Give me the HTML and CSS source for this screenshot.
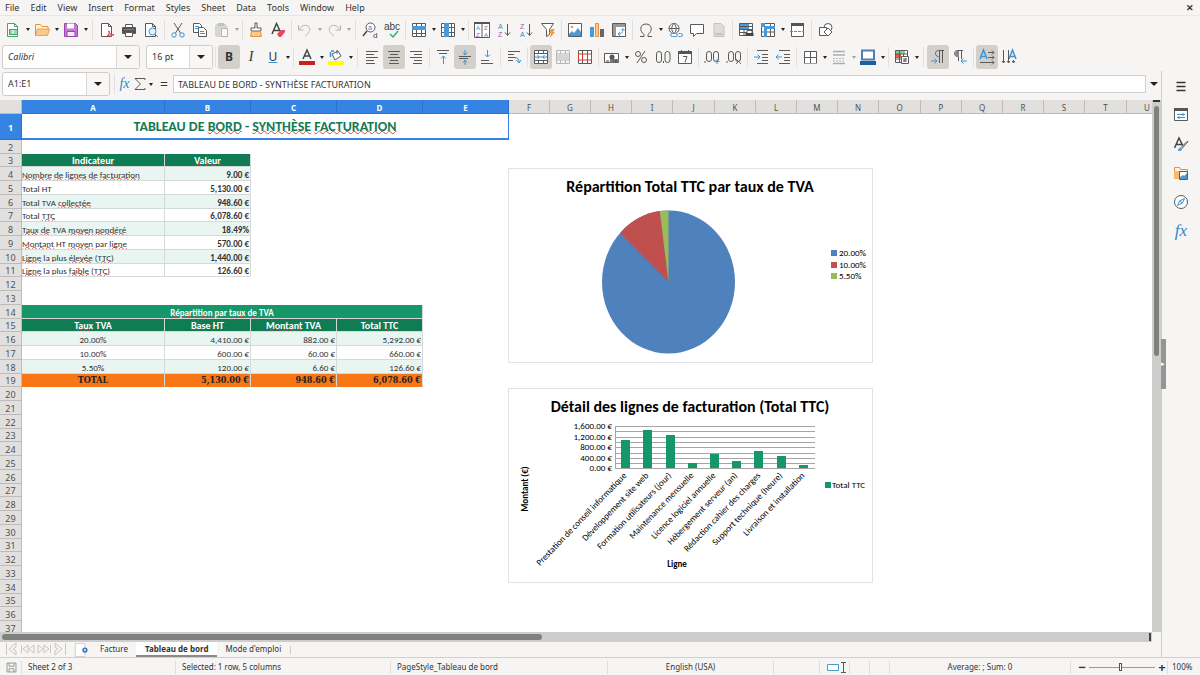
FILE: index.html
```html
<!DOCTYPE html>
<html lang="en">
<head>
<meta charset="utf-8">
<title>Tableau de bord</title>
<link rel="stylesheet" href="styles.css">
</head>
<body>
<div class="app">
<nav class="menubar">
<button>File</button><button>Edit</button><button>View</button><button>Insert</button><button>Format</button><button>Styles</button><button>Sheet</button><button>Data</button><button>Tools</button><button>Window</button><button>Help</button>
<button class="close" aria-label="Close">✕</button>
</nav>

<div class="toolbar" role="toolbar" aria-label="Standard">
<button class="tool" aria-label="New"><svg viewBox="0 0 16 16"><path class="g" d="M2.5 1.500h7l3 3v10h-10z M9.500 1.500v3h3"/><path class="gf" d="M4 7h9v6H4z"/><path d="M5 9h7M5 11h7M8 8v4" stroke="#fff"/></svg></button><button class="drop" aria-label="New options"></button>
<button class="tool" aria-label="Open"><svg viewBox="0 0 16 16"><path d="M1.500 13.500V2.500h5l1.500 2h6v3" fill="#fff3df" stroke="#e9913a"/><path d="M1.500 13.500l2-6.500h12l-2 6.500z" fill="#fbc98a" stroke="#e9a050"/></svg></button><button class="drop" aria-label="Open options"></button>
<button class="tool" aria-label="Save"><svg viewBox="0 0 16 16"><path d="M1.500 1.500h11l2 2v11h-13z" fill="#c37bd1" stroke="#9a45ad"/><path d="M4 1.500h7v5H4z" fill="#fff"/><path d="M4 9.500h8v5H4z" fill="#f5e9f7" stroke="#9a45ad"/></svg></button><button class="drop" aria-label="Save options"></button>
<span class="sep wide"></span>
<button class="tool" aria-label="Export PDF"><svg viewBox="0 0 16 16"><path class="k w" d="M2.500 1.500h7l3 3v10h-10z M9.500 1.500v3h3"/><path d="M7 15c3-2 4-5 3-6s-1 3 5 4c-3-.5-6 0-8 2" fill="none" stroke="#e0384a"/></svg></button>
<button class="tool" aria-label="Print"><svg viewBox="0 0 16 16"><path class="k w" d="M4.500 5V2.500h7V5"/><rect x="1" y="5" width="14" height="7" rx="1" fill="#555"/><path class="b" d="M3 7.500h10"/><path class="k w" d="M4.500 10.500h7v4h-7z"/></svg></button>
<button class="tool" aria-label="Preview"><svg viewBox="0 0 16 16"><path class="k w" d="M2.500 1.500h7l3 3v10h-10z M9.500 1.500v3h3"/><circle cx="9.500" cy="9.500" r="3.500" fill="#e3f1fb" stroke="#3a94d6"/><path class="b" d="M12 12l3 3"/></svg></button>
<span class="sep"></span>
<button class="tool" aria-label="Cut"><svg viewBox="0 0 16 16"><path class="k" d="M4 1l6.500 10M12 1L5.500 11"/><circle class="b" cx="4" cy="13" r="2.200"/><circle class="b" cx="12" cy="13" r="2.200"/></svg></button>
<button class="tool" aria-label="Copy"><svg viewBox="0 0 16 16"><path class="k w" d="M1.500 1.500h6l2 2v7h-8z"/><path class="k w" d="M6.500 5.500h5l3 3v6h-8z"/><path class="b" d="M3 4.500h4M3 6.500h3M8 9.500h4M8 11.500h5"/></svg></button>
<button class="tool dim" aria-label="Paste"><svg viewBox="0 0 16 16"><path class="k" d="M2 3h10v11H2z"/><path d="M2 3h10v11H2z" fill="#aaa"/><path d="M4 1h6v3H4z" fill="#777"/><path class="k w" d="M7.500 6.500h6v8h-6z"/></svg></button><button class="drop dim" aria-label="Paste options"></button>
<span class="sep"></span>
<button class="tool" aria-label="Clone formatting"><svg viewBox="0 0 16 16"><path class="k w" d="M7 1h2v5h4v3H3V6h4z"/><path d="M3.500 9.500h9l1 5h-11z" fill="#fbc98a" stroke="#e9913a"/></svg></button>
<button class="tool" aria-label="Clear formatting"><svg viewBox="0 0 16 16"><path class="k2" d="M2 12L6.500 1.500 11 11M4 8.500h5"/><path d="M7 12l4-4h4v2l-4 5H9z" fill="#e8465a"/></svg></button>
<span class="sep"></span>
<button class="tool dim" aria-label="Undo"><svg viewBox="0 0 16 16"><path class="k" d="M1.500 3v5h5M2 8c2-5 8-6 10-3s0 6-4 9"/></svg></button><button class="drop dim" aria-label="Undo history"></button>
<button class="tool dim" aria-label="Redo"><svg viewBox="0 0 16 16"><path class="k" d="M14.500 3v5h-5M14 8C12 3 6 2 4 5s0 6 4 9"/></svg></button><button class="drop dim" aria-label="Redo history"></button>
<span class="sep wide"></span>
<button class="tool" aria-label="Find and replace"><svg viewBox="0 0 16 16"><circle class="k w" cx="8.500" cy="5.500" r="4.500"/><path class="k2" d="M5 9l-4 5"/><text x="6" y="8" class="tb" font-size="7">a</text><text x="11" y="16" class="tk" font-size="8">d</text></svg></button>
<button class="tool" aria-label="Spelling"><svg viewBox="0 0 16 16"><text x="0" y="8" class="tk" font-size="10">abc</text><path class="g2" d="M6 12l3 3 5-6"/></svg></button>
<span class="sep"></span>
<button class="tool" aria-label="Row"><svg viewBox="0 0 16 16"><path class="k w" d="M1.500 1.500h13v13h-13z M1.500 11.500h13M5.500 1.500v13M10.500 1.500v13"/><path class="bf" d="M1 4h14v4H1z"/></svg></button><button class="drop" aria-label="Row options"></button>
<button class="tool" aria-label="Column"><svg viewBox="0 0 16 16"><path class="k w" d="M1.500 1.500h13v13h-13z M1.500 5.500h13M1.500 10.500h13M11.500 1.500v13"/><path class="bf" d="M4 1h5v14H4z"/></svg></button><button class="drop" aria-label="Column options"></button>
<span class="sep"></span>
<button class="tool" aria-label="Sort"><svg viewBox="0 0 16 16"><path class="k w" d="M.5 1.500h15v14H.5z M8 1.500v14"/><path d="M0 0h16v2H0z" fill="#555"/><text x="2" y="8" class="tb" font-size="6">A</text><text x="2" y="15" class="tp" font-size="6">Z</text><text x="10" y="8" class="tp" font-size="6">Z</text><text x="10" y="15" class="tb" font-size="6">A</text></svg></button>
<button class="tool" aria-label="Sort ascending"><svg viewBox="0 0 16 16"><text x="2" y="7" class="tb" font-size="7">A</text><text x="2" y="15" class="tp" font-size="7">Z</text><path class="k" d="M11.500 2v11M9 10.500l2.500 3 2.500-3"/></svg></button>
<button class="tool" aria-label="Sort descending"><svg viewBox="0 0 16 16"><text x="2" y="7" class="tp" font-size="7">Z</text><text x="2" y="15" class="tb" font-size="7">A</text><path class="k" d="M11.500 2v11M9 10.500l2.500 3 2.500-3"/></svg></button>
<button class="tool" aria-label="AutoFilter"><svg viewBox="0 0 16 16"><path class="k w" d="M1.500 1.500h12l-4 6v5l-3 2v-7z"/><path d="M11 7h4l-2 3h2l-5 6 1-5H9z" fill="#f0993e"/></svg></button>
<span class="sep"></span>
<button class="tool" aria-label="Image"><svg viewBox="0 0 16 16"><path class="k w" d="M1.500 1.500h13v13h-13z"/><path class="bf" d="M2 14v-2l3-3 2 2 4-5 3 4v4z"/><circle cx="5" cy="5" r="1.300" fill="#f0993e"/></svg></button>
<button class="tool" aria-label="Chart"><svg viewBox="0 0 16 16"><path class="bf" d="M1 5h4v10H1z"/><path d="M6.500 1.500h3v13h-3z" fill="#fbc98a" stroke="#e9913a"/><path d="M11 7h4v8h-4z" fill="#666"/></svg></button>
<button class="tool" aria-label="Pivot table"><svg viewBox="0 0 16 16"><path class="k w" d="M1.500 1.500h13v13h-13z"/><path d="M2 2h12v3H5v9H2z" fill="#999"/><path class="b" d="M7 12c3 0 5-1 5-5M10 8.500l2-2 2 2M9 10l-2 2 2 2"/></svg></button>
<span class="sep"></span>
<button class="tool" aria-label="Special character"><svg viewBox="0 0 16 16"><path class="k" d="M2 14.500h4v-2C1 9 2 2 8 2s7 7 2 10.500v2h4"/></svg></button><button class="drop" aria-label="More characters"></button>
<button class="tool" aria-label="Hyperlink"><svg viewBox="0 0 16 16"><path class="k w" d="M7 1.500a5 5 0 1 0 .1 0M2 6.500h10M7 1.500c-3 3-3 7 0 10M7 1.500c3 3 3 7 0 10"/><path class="b w" d="M5.500 11.500h3q2 0 2 1.500t-2 1.500h-3q-2 0-2-1.500t2-1.500M11.500 11.500h2q2 0 2 1.500t-2 1.500h-2"/></svg></button>
<button class="tool" aria-label="Comment"><svg viewBox="0 0 16 16"><path class="k w" d="M1.500 2.500h13v9h-7l-3 3v-3h-3z"/></svg></button>
<button class="tool dim" aria-label="Headers and footers"><svg viewBox="0 0 16 16"><path d="M3 1.500h7l3 3v10H3z" fill="#bbb" stroke="#777"/><path d="M4.500 11h7v2h-7z" fill="#777"/></svg></button>
<span class="sep"></span>
<button class="tool" aria-label="Print area"><svg viewBox="0 0 16 16"><path class="k w" d="M1.500 1.500h13v12h-13z M1.500 10.500h13M6 1v13M10.500 1v13"/><path class="bf" d="M2 2h9v6H2z"/><path class="k" d="M1.500 4.500h13M1.500 7.500h13"/><path class="k w" d="M9 8.500h5v3H9z"/><path d="M7.500 11h8v3h-8z" fill="#444"/></svg></button>
<button class="tool" aria-label="Freeze"><svg viewBox="0 0 16 16"><path class="k w" d="M1.500 1.500h13v13h-13z M1.500 10h13M10.500 1v14"/><path class="bf" d="M4 4h11v3H7v8H4z M1 1h4v4H1z"/></svg></button><button class="drop" aria-label="Freeze options"></button>
<button class="tool" aria-label="Split window"><svg viewBox="0 0 16 16"><path class="k w" d="M2.500 2.500h12v12h-12z"/><path d="M2 1h13v3H2z" fill="#555"/><path class="b" d="M1 9.500h14" stroke-dasharray="3 1"/></svg></button>
<span class="sep wide"></span>
<button class="tool" aria-label="Draw functions"><svg viewBox="0 0 16 16"><circle class="k w" cx="10" cy="5.500" r="4"/><path class="k w" d="M1.500 5.500h7v8h-7z"/><path class="k w" d="M10 6l4 4-4 4-4-4z"/></svg></button>
</div>

<div class="toolbar format" role="toolbar" aria-label="Formatting">
<div class="combo font"><input aria-label="Font name" value="Calibri"><button aria-label="Font list"></button></div>
<div class="combo size"><input aria-label="Font size" value="16 pt"><button aria-label="Size list"></button></div>
<span class="sep"></span>
<button class="tool on glyph" aria-label="Bold"><b>B</b></button>
<button class="tool glyph" aria-label="Italic"><i>I</i></button>
<button class="tool glyph" aria-label="Underline"><u>U</u></button><button class="drop" aria-label="Underline options"></button>
<span class="sep"></span>
<button class="tool" aria-label="Font color"><svg viewBox="0 0 16 16"><path class="k2" d="M4 10L8 1l4 9M5.500 7h5"/><path d="M0 12h16v4H0z" fill="#c9211e"/></svg></button><button class="drop" aria-label="Font colors"></button>
<button class="tool" aria-label="Highlighting"><svg viewBox="0 0 16 16"><path class="k w" d="M4 5l6-3 3 5-6 4z M9 1v4"/><path class="b2" d="M3 2h3M2.500 3v5"/><path d="M0 12h16v4H0z" fill="#ff0"/></svg></button><button class="drop" aria-label="Highlight colors"></button>
<span class="sep wide"></span>
<button class="tool" aria-label="Align left"><svg viewBox="0 0 16 16"><path class="k" d="M2 2.500h12M2 5.500h8M2 8.500h12M2 11.500h8M2 14.500h9"/></svg></button>
<button class="tool on" aria-label="Center"><svg viewBox="0 0 16 16"><path class="k" d="M2 2.500h12M4 5.500h8M2 8.500h12M4 11.500h8M3 14.500h10"/></svg></button>
<button class="tool" aria-label="Align right"><svg viewBox="0 0 16 16"><path class="k" d="M2 2.500h12M6 5.500h8M2 8.500h12M6 11.500h8M5 14.500h9"/></svg></button>
<span class="sep"></span>
<button class="tool" aria-label="Align top"><svg viewBox="0 0 16 16"><path class="k" d="M2 1.500h12M4 4.500h8"/><path class="b" d="M8.500 15V7M6 9.500L8.500 7 11 9.500"/></svg></button>
<button class="tool on" aria-label="Center vertically"><svg viewBox="0 0 16 16"><path class="k" d="M2 7.500h12M2 9.500h9"/><path class="b" d="M8 1v5M6 3.500L8 6l2-2.500M8 16v-5M6 13.500L8 11l2 2.500"/></svg></button>
<button class="tool" aria-label="Align bottom"><svg viewBox="0 0 16 16"><path class="k" d="M2 11.500h8M2 14.500h12"/><path class="b" d="M8.500 1v7M6 5.500L8.500 8 11 5.500"/></svg></button>
<span class="sep"></span>
<button class="tool" aria-label="Wrap text"><svg viewBox="0 0 16 16"><path class="k" d="M2 2.500h12M2 5.500h6M2 8.500h8M2 11.500h5"/><path class="b" d="M9 8.500c3 0 4 2 4 5M10.500 11l2.500 3 2-3"/></svg></button>
<span class="sep"></span>
<button class="tool on" aria-label="Merge and center"><svg viewBox="0 0 16 16"><path class="k w" d="M1.500 1.500h13v13h-13z M1.500 4.500h13M1.500 11.500h13M5.500 1.500v3M10.500 1.500v3M5.500 11.500v3M10.500 11.500v3"/><path class="b" d="M2 8h12M4.500 6L6 8l-1.500 2M11.500 6L10 8l1.500 2"/></svg></button>
<button class="tool dim" aria-label="Merge"><svg viewBox="0 0 16 16"><path class="k" d="M1.500 1.500h13v13h-13z M1.500 5h13M1.500 11h13M5.500 1.500V5M10.500 1.500V5M5.500 11v3.500M10.500 11v3.500"/><path d="M2 5h12v6H2z" fill="#aaa"/></svg></button>
<button class="tool" aria-label="Unmerge"><svg viewBox="0 0 16 16"><path class="k w" d="M1.500 1.500h13v13h-13zM5.500 1v14M10.500 1v14"/><path d="M1.500 5h13v6h-13zM5.500 5v6M10.500 5v6" fill="none" stroke="#d9382f"/></svg></button>
<span class="sep"></span>
<button class="tool" aria-label="Currency"><svg viewBox="0 0 16 16"><path class="k w" d="M.5 4.500h14v9H.5z"/><circle cx="8" cy="8" r="2.500" fill="#555"/><path d="M6 10h9v4H6z" fill="#777"/><path d="M2 12h3M9 12h1M12 11v3" stroke="#444"/></svg></button><button class="drop" aria-label="Currencies"></button>
<button class="tool" aria-label="Percent"><svg viewBox="0 0 16 16"><circle class="k" cx="5" cy="5" r="2.500"/><circle class="k" cx="11" cy="11" r="2.500"/><path class="k" d="M12 2L4 14"/></svg></button>
<button class="tool" aria-label="Number"><svg viewBox="0 0 16 16"><rect class="k" x="1.500" y="2.500" width="5" height="11" rx="2.500"/><rect class="k" x="10" y="2.500" width="5" height="11" rx="2.500"/><path class="k" d="M8.500 12v2"/></svg></button>
<button class="tool" aria-label="Date"><svg viewBox="0 0 16 16"><path class="k w" d="M1.500 3.500h13v11h-13z"/><path d="M1 2h14v3H1z" fill="#555"/><path class="k" d="M4.500 1v2M11.500 1v2M6 7.500h4l-2 6"/></svg></button>
<span class="sep"></span>
<button class="tool" aria-label="Add decimal place"><svg viewBox="0 0 16 16"><path class="k" d="M1 12v2"/><rect class="k" x="2.500" y="2.500" width="5" height="10" rx="2.500"/><rect class="k" x="9.500" y="2.500" width="5" height="10" rx="2.500"/><path class="b" d="M13 10v5M10.500 12.500h5"/></svg></button>
<button class="tool" aria-label="Delete decimal place"><svg viewBox="0 0 16 16"><path class="k" d="M1 12v2"/><rect class="k" x="2.500" y="2.500" width="5" height="10" rx="2.500"/><rect class="k" x="9.500" y="2.500" width="5" height="10" rx="2.500"/><path d="M10 10l5 5M15 10l-5 5" stroke="#e0382f"/></svg></button>
<span class="sep"></span>
<button class="tool" aria-label="Increase indent"><svg viewBox="0 0 16 16"><path class="k" d="M4 1.500h11M9 5.500h6M9 8.500h6M9 11.500h6M4 14.500h11"/><path class="b" d="M1 8h6M4.500 5.500L7 8l-2.500 2.500"/></svg></button>
<button class="tool" aria-label="Decrease indent"><svg viewBox="0 0 16 16"><path class="k" d="M4 1.500h11M9 5.500h6M9 8.500h6M9 11.500h6M4 14.500h11"/><path class="b" d="M1 8h6M3.500 5.500L1 8l2.500 2.500"/></svg></button>
<span class="sep"></span>
<button class="tool" aria-label="Borders"><svg viewBox="0 0 16 16"><path class="k w" d="M2.500 2.500h12v12h-12zM8.500 2.500v12M2.500 8.500h12"/><path d="M2 14.500h13" stroke="#e9913a"/></svg></button><button class="drop" aria-label="Border options"></button>
<button class="tool dim" aria-label="Border style"><svg viewBox="0 0 16 16"><path class="k2" d="M2 2.500h12M2 6h12"/><path class="k" d="M2 9.500h12M2 12h12" stroke-dasharray="2 1"/><path class="k2" d="M2 14.500h12"/></svg></button><button class="drop dim" aria-label="Border styles"></button>
<button class="tool" aria-label="Border color"><svg viewBox="0 0 16 16"><path d="M2 1.500h12v9H2z" fill="#fff" stroke="#4b7fb5" stroke-width="2"/><path d="M0 12h16v4H0z" fill="#1f5fa0"/></svg></button><button class="drop" aria-label="Border colors"></button>
<span class="sep"></span>
<button class="tool" aria-label="Conditional formatting"><svg viewBox="0 0 16 16"><path class="k w" d="M1.500 1.500h12v12h-12zM1.500 10h12M9.500 1v12"/><path d="M2 2h9v3H2z" fill="#7dcf8e"/><path d="M2 5h5v4H2z" fill="#e8564a"/><path d="M5.500 1v13M1.500 5h12" class="k"/><path class="k w" d="M7.500 7.500h7v7h-7zM9 10h4M9 12h4M12 9l-2 4"/></svg></button><button class="drop" aria-label="Conditions"></button>
<span class="sep wide"></span>
<button class="tool on" aria-label="Left-to-right"><svg viewBox="0 0 16 16"><path class="k" d="M14 1.500H8.500c-4 0-4 6 0 6M9.500 2v12M12.500 2v12"/><path class="b" d="M1 12h6M4.500 9.500L7 12l-2.500 2.500"/></svg></button>
<button class="tool" aria-label="Right-to-left"><svg viewBox="0 0 16 16"><path class="k" d="M11 1.500H5.500c-4 0-4 6 0 6M6.500 2v10M9.500 2v8"/><path d="M4 2h3v6c-4 0-5-4-3-6" fill="#888"/><path class="b" d="M9 12h6M11.500 9.500L9 12l2.500 2.500"/></svg></button>
<span class="sep"></span>
<button class="tool on" aria-label="Text left to right"><svg viewBox="0 0 16 16"><path class="b2" d="M1 10L4.500 1 8 10M2 7.500h5"/><path class="k" d="M9 3.500h6M13 1.500l2 2-2 2M9 8.500h6M13 6.500l2 2-2 2M1 13.500h14M13 11.500l2 2-2 2"/></svg></button>
<button class="tool" aria-label="Text top to bottom"><svg viewBox="0 0 16 16"><path class="b2" d="M8 10l3.500-9L15 10M9 7.500h5"/><path class="k" d="M2.500 1v13M1 12l1.500 2L4 12M7.500 1v13M6 12l1.500 2L9 12M12.500 11v3M11 12l1.500 2 1.500-2"/></svg></button>
</div>

<div class="workspace">
<main class="document">
<div class="formulabar">
<div class="combo name"><input aria-label="Name box" value="A1:E1"><button aria-label="Names"></button></div>
<span class="sep"></span>
<button class="fn fx" aria-label="Function wizard">fx</button>
<button class="fn" aria-label="Sum"><svg viewBox="0 0 16 16"><path class="k" d="M13 4V2.500H3L8.500 8 3 13.500h10V12"/></svg></button><button class="drop" aria-label="Functions"></button>
<button class="fn eq" aria-label="Formula">=</button>
<input class="formula" aria-label="Input line" value="TABLEAU DE BORD - SYNTHÈSE FACTURATION">
<button class="expand" aria-label="Expand"></button>
</div>

<div class="sheetarea">
<div class="sheet">
<table class="grid">
<colgroup><col class="rowhead"><col class="ca"><col class="cb"><col class="cb"><col class="cb"><col class="cb"><col><col><col><col><col class="cx"><col><col><col><col><col class="cx"><col><col><col><col><col class="cx"><col></colgroup>
<thead><tr><th></th><th class="sel">A</th><th class="sel">B</th><th class="sel">C</th><th class="sel">D</th><th class="sel">E</th><th>F</th><th>G</th><th>H</th><th>I</th><th>J</th><th>K</th><th>L</th><th>M</th><th>N</th><th>O</th><th>P</th><th>Q</th><th>R</th><th>S</th><th>T</th><th>U</th></tr></thead>
<tbody>
<tr class="first"><th class="sel">1</th><td class="title" colspan="5">TABLEAU DE <s>BORD</s> - <s>SYNTHÈSE</s> <s>FACTURATION</s></td></tr>
<tr><th>2</th></tr>
<tr class="head"><th>3</th><td><s>Indicateur</s></td><td><s>Valeur</s></td></tr>
<tr class="kpi tint"><th>4</th><td><s>Nombre</s> <s>de</s> <s>lignes</s> <s>de</s> <s>facturation</s></td><td>9.00 €</td></tr>
<tr class="kpi"><th>5</th><td>Total HT</td><td>5,130.00 €</td></tr>
<tr class="kpi tint"><th>6</th><td>Total TVA <s>collectée</s></td><td>948.60 €</td></tr>
<tr class="kpi"><th>7</th><td>Total <s>TTC</s></td><td>6,078.60 €</td></tr>
<tr class="kpi tint"><th>8</th><td><s>Taux</s> <s>de</s> TVA <s>moyen</s> <s>pondéré</s></td><td>18.49%</td></tr>
<tr class="kpi"><th>9</th><td><s>Montant</s> HT <s>moyen</s> par <s>ligne</s></td><td>570.00 €</td></tr>
<tr class="kpi tint"><th>10</th><td><s>Ligne</s> la plus <s>élevée</s> (<s>TTC</s>)</td><td>1,440.00 €</td></tr>
<tr class="kpi"><th>11</th><td><s>Ligne</s> la plus <s>faible</s> (<s>TTC</s>)</td><td>126.60 €</td></tr>
<tr><th>12</th></tr>
<tr><th>13</th></tr>
<tr class="band"><th>14</th><td colspan="4"><s>Répartition</s> par <s>taux</s> <s>de</s> TVA</td></tr>
<tr class="head"><th>15</th><td><s>Taux</s> TVA</td><td>Base HT</td><td><s>Montant</s> TVA</td><td>Total <s>TTC</s></td></tr>
<tr class="vat tint"><th>16</th><td>20.00%</td><td>4,410.00 €</td><td>882.00 €</td><td>5,292.00 €</td></tr>
<tr class="vat"><th>17</th><td>10.00%</td><td>600.00 €</td><td>60.00 €</td><td>660.00 €</td></tr>
<tr class="vat tint"><th>18</th><td>5.50%</td><td>120.00 €</td><td>6.60 €</td><td>126.60 €</td></tr>
<tr class="total"><th>19</th><td>TOTAL</td><td>5,130.00 €</td><td>948.60 €</td><td>6,078.60 €</td></tr>
<tr><th>20</th></tr><tr><th>21</th></tr><tr><th>22</th></tr><tr><th>23</th></tr><tr><th>24</th></tr><tr><th>25</th></tr><tr><th>26</th></tr><tr><th>27</th></tr><tr><th>28</th></tr><tr><th>29</th></tr><tr><th>30</th></tr><tr><th>31</th></tr><tr><th>32</th></tr><tr><th>33</th></tr><tr><th>34</th></tr><tr><th>35</th></tr><tr><th>36</th></tr><tr><th>37</th></tr>
</tbody>
</table>
<svg class="chart pie" viewBox="0 0 365 195" role="img" aria-label="Répartition Total TTC par taux de TVA">
<text class="ctitle" x="182" y="24">Répartition Total TTC par taux de TVA</text>
<ellipse cx="160.500" cy="114" rx="66.500" ry="71.500" fill="#4f81bd"/>
<path d="M160.500 114L112.200 64.900A66.500 71.500 0 0 1 151.800 43.100z" fill="#c0504d"/>
<path d="M160.500 114L151.800 43.100A66.500 71.500 0 0 1 160.500 42.500z" fill="#9bbb59"/>
<path d="M323 82h6v6h-6z" fill="#4f81bd"/><path d="M323 94h6v6h-6z" fill="#c0504d"/><path d="M323 105h6v6h-6z" fill="#9bbb59"/>
<text class="clabel" x="331" y="88">20.00%</text><text class="clabel" x="331" y="100">10.00%</text><text class="clabel" x="331" y="111">5.50%</text>
</svg>
<svg class="chart bars" viewBox="0 0 365 195" role="img" aria-label="Détail des lignes de facturation (Total TTC)">
<text class="ctitle" x="182" y="24">Détail des lignes de facturation (Total TTC)</text>
<path class="gridlines" d="M107 38.500h200M107 43.500h200M107 49.500h200M107 54.500h200M107 59.500h200M107 65.500h200M107 70.500h200M107 75.500h200M107 80.500h200M107.500 38v43"/>
<path class="bar" d="M113 52h9v28h-9zM135 42h9v38h-9zM158 47h9v33h-9zM180 75h9v5h-9zM202 66h9v14h-9zM224 73h9v7h-9zM246 63h9v17h-9zM269 68h9v12h-9zM291 77h9v3h-9z"/>
<g class="clabel end"><text x="104" y="41">1,600.00 €</text><text x="104" y="52">1,200.00 €</text><text x="104" y="62">800.00 €</text><text x="104" y="73">400.00 €</text><text x="104" y="83">0.00 €</text></g>
<g class="clabel end"><text transform="translate(119 88) rotate(-46)">Prestation de conseil informatique</text><text transform="translate(141 88) rotate(-46)">Développement site web</text><text transform="translate(164 88) rotate(-46)">Formation utilisateurs (jour)</text><text transform="translate(186 88) rotate(-46)">Maintenance mensuelle</text><text transform="translate(208 88) rotate(-46)">Licence logiciel annuelle</text><text transform="translate(230 88) rotate(-46)">Hébergement serveur (an)</text><text transform="translate(253 88) rotate(-46)">Rédaction cahier des charges</text><text transform="translate(275 88) rotate(-46)">Support technique (heure)</text><text transform="translate(297 88) rotate(-46)">Livraison et installation</text></g>
<text class="caxis" transform="translate(20 101) rotate(-90)">Montant (€)</text>
<text class="caxis" x="169" y="179">Ligne</text>
<path class="bar" d="M317 94h6v6h-6z"/><text class="clabel" x="324" y="100">Total TTC</text>
</svg>
</div>
<div class="vscroll"><span class="mark"></span><span class="thumb"></span></div>
<div class="hscroll"><span class="thumb"></span><span class="mark"></span></div>
</div>

<div class="tabs">
<svg class="navs" viewBox="0 0 62 14"><path d="M1.500 1v12M11 1L4 7l7 6V9l-3-2 3-2zM16.500 3v8M23 3l-5 4 5 4zM29 3l-5 4 5 4zM33 3l5 4-5 4zM39 3l5 4-5 4zM45.500 3v8M50 1l7 6-7 6V9l3-2-3-2zM60.500 1v12"/></svg>
<button class="add" aria-label="Add sheet"><svg viewBox="0 0 16 16"><path d="M1.500.5h11v15h-11z" fill="#fff" stroke="#ccc"/><circle cx="12.500" cy="8" r="3" fill="#2a6db5"/><path d="M12.500 6.500v3M11 8h3" stroke="#fff"/></svg></button>
<button class="tab">Facture</button><button class="tab active">Tableau de bord</button><button class="tab last">Mode d'emploi</button>
</div>
</main>

<aside class="sidebar">
<button aria-label="Settings"><svg viewBox="0 0 16 16"><path d="M3.500 4.500h9M3.500 8.500h9M3.500 12.500h9" stroke="#333" stroke-width="1.500"/></svg></button>
<button aria-label="Properties"><svg viewBox="0 0 16 16"><path class="k w" d="M1.500 2.500h13v11h-13z"/><path d="M1 1h14v3H1z" fill="#555"/><path class="b" d="M4 7.500h8M10 6v3M4 10.500h8M6 9v3"/></svg></button>
<button aria-label="Styles"><svg viewBox="0 0 16 16"><path class="k2" d="M1.500 12L6 2l4 8M3 8.500h6"/><path class="k w" d="M15 5.500l-6 7-1-1 6-6z"/><path class="bf" d="M5 15c0-3 2-4 4-2 0 2-2 2-4 2"/></svg></button>
<button aria-label="Gallery"><svg viewBox="0 0 16 16"><path d="M1.500 13.500V2.500h5l1 2h7v2" fill="#fff3df" stroke="#e9913a"/><path d="M1 6h6v8H1z" fill="#f8b96b"/><path class="k w" d="M6.500 6.500h8v8h-8z"/><path class="bf" d="M7 14v-2l3-2 1 1 3-3v6z"/></svg></button>
<button aria-label="Navigator"><svg viewBox="0 0 16 16"><circle class="k w" cx="8" cy="8" r="6.500"/><path class="b" d="M11.500 4.500L9.500 9l-5 2.500L6.500 7zM6.500 7l3 2"/></svg></button>
<button class="fx" aria-label="Functions">fx</button>
<span class="grip">▸</span>
</aside>
</div>

<footer class="status">
<span class="saveicon"><svg viewBox="0 0 16 16"><path d="M2.500 2.500h11v11h-11zM5 2.500v4h6v-4M5 13.500v-4h6v4" fill="none" stroke="#888"/></svg></span>
<span>Sheet 2 of 3</span><span>Selected: 1 row, 5 columns</span><span>PageStyle_Tableau de bord</span><span class="mid">English (USA)</span><span></span>
<span class="ins"><svg viewBox="0 0 26 12"><path d="M3.500 3.500h11v6h-11z" fill="#fff" stroke="#4a9ad4"/><path class="k" d="M17 1.500h5M17 11.500h5M19.500 1v11"/></svg></span><span></span><span></span>
<span class="mid">Average: ; Sum: 0</span>
<span class="zoom"><button aria-label="Zoom out">−</button><input type="range" min="0" max="100" value="48" aria-label="Zoom"><button aria-label="Zoom in">+</button></span>
<span class="pct">100%</span>
</footer>
</div>
</body>
</html>
```

FILE: styles.css
```css
* { box-sizing: border-box; }
body { margin: 0; background: #f6f5f4; color: #333; font: 9px/12px "Noto Sans", sans-serif; }
button, input { font: inherit; color: inherit; border: 0; padding: 0; margin: 0; background: none; }
svg { display: block; }
.app { display: flex; flex-direction: column; height: 100vh; overflow: hidden; }

/* drawing classes shared by the icons */
.k { fill: none; stroke: #5a5a5a; }
.k2 { fill: none; stroke: #444; stroke-width: 1.500; }
.w { fill: #fff; }
.b { fill: none; stroke: #3a94d6; }
.b.w { fill: #fff; }
.b2 { fill: none; stroke: #3a94d6; stroke-width: 1.500; }
.bf { fill: #4a9ad9; }
.g { fill: #fff; stroke: #45a565; }
.g2 { fill: none; stroke: #35b36a; stroke-width: 1.500; }
.gf { fill: #45a565; }
.tk { fill: #444; }
.tb { fill: #2f8ad0; }
.tp { fill: #a94fc0; }
.tool text { font-family: "Liberation Sans", sans-serif; }

.menubar { display: flex; flex: none; align-items: center; height: 16px; border-bottom: 1px solid #e8e7e5; }
.menubar button { padding: 0 6px 0 5px; }
.menubar .close { margin-left: auto; font-weight: bold; }

.toolbar { display: flex; flex: none; align-items: center; height: 27px; padding-left: 2px; }
.format { height: 28px; }
.tool { display: flex; flex: none; align-items: center; justify-content: center; width: 22px; height: 24px; border-radius: 3px; }
.tool svg, .fn svg { width: 16px; height: 16px; overflow: visible; }
.tool.on { background: #d3d0cc; }
.tool.dim, .drop.dim { opacity: .4; }
.glyph { font-size: 12px; line-height: 16px; }
.glyph i { font-family: "Liberation Serif", serif; font-size: 14px; }
.glyph u { text-decoration-color: #3a94d6; }
.drop { flex: none; display: flex; justify-content: center; width: 7px; }
.drop::after, .combo button::after, .expand::after { content: ""; border: 3px solid transparent; border-top-color: #222; border-bottom: 0; }
.drop::after { border-width: 3px 2px 0; }
.combo button::after, .expand::after { border-width: 4px 4px 0; }
.sep { flex: none; width: 5px; height: 20px; background: linear-gradient(#e2e0de, #e2e0de) center / 1px 100% no-repeat; }
.sep.wide { width: 7px; }
.combo { display: flex; flex: none; height: 24px; border: 1px solid #cfccc9; border-radius: 3px; background: #fff; overflow: hidden; }
.combo input { flex: 1; min-width: 0; padding-left: 5px; }
.combo button { display: flex; align-items: center; justify-content: center; width: 23px; border-left: 1px solid #dad7d4; background: #f8f7f6; }
.font { width: 138px; margin-right: 6px; }
.font input { font-style: italic; }
.size { width: 67px; }

.workspace { display: flex; flex: 1; min-height: 0; }
.document { display: flex; flex: 1; flex-direction: column; min-width: 0; }
.formulabar { display: flex; flex: none; align-items: center; height: 26px; padding-left: 2px; }
.name { width: 108px; margin-right: 2px; }
.fn { display: flex; align-items: center; justify-content: center; width: 15px; height: 20px; }
.fx { color: #2f86cd; font: italic 14px/16px "Liberation Serif", serif; }
.formulabar .drop { width: 8px; }
.fn.eq { width: 18px; font-size: 14px; }
.formula { flex: 1; min-width: 0; height: 18px; padding: 0 4px; border: 1px solid #d3d0cd; background: #fff; }
.expand { display: flex; justify-content: center; width: 15px; }

.sheetarea { display: grid; flex: 1; grid-template: minmax(0, 1fr) 10px / minmax(0, 1fr) 9px; min-height: 0; margin-top: 3px; }
.sheet { position: relative; overflow: hidden; background: #fff; }
.grid { width: 1146px; border-collapse: separate; border-spacing: 0; table-layout: fixed; }
col { width: 41px; }
.cx { width: 42px; }
.rowhead { width: 22px; }
.ca { width: 143px; }
.cb { width: 86px; }
.grid th { height: 14px; padding: 1px 0 0; border: solid #bdbcba; border-width: 0 1px 1px 0; background: #e1e0df; color: #505050; font-weight: normal; font-size: 9px; line-height: 11px; }
.grid thead th { font-size: 8px; }
.grid .sel { background: #3584e4; border-color: #2b72c8; color: #fff; font-weight: bold; }
.grid .first th { height: 26px; }
.grid tbody tr:nth-child(4n + 3) th { height: 13px; }
.grid td { padding: 1px 1px 0; border: solid #d5d9d7; border-width: 0 1px 1px 0; font: 9px/11px Carlito, Lato, sans-serif; overflow: hidden; white-space: nowrap; text-align: right; }
.grid s { text-decoration: underline wavy #e0413a 1px; text-underline-offset: -1px; text-decoration-skip-ink: none; }
.grid .title { border: solid #3584e4; border-width: 0 1px 2px 0; color: #147a54; font-size: 14px; line-height: 18px; font-weight: bold; text-align: center; }
.grid .head td { background: #107c54; color: #fff; font-size: 10px; font-weight: bold; text-align: center; }
.grid .band td { background: #15976a; color: #fff; font-weight: bold; text-align: center; }
.tint td { background: #e8f5f0; }
.grid .kpi td:nth-child(2) { padding-left: 0; text-align: left; }
.grid .kpi td:nth-child(3) { font-weight: bold; }
.vat td:nth-child(2), .grid .total td:nth-child(2) { text-align: center; }
.grid .total td { background: #f97617; color: #222; border-bottom-color: #f97617; font: bold 9px/11px "DejaVu Serif Condensed", "DejaVu Serif", serif; }

.chart { position: absolute; left: 508px; width: 365px; height: 195px; outline: 1px solid #e2e2e2; outline-offset: -1px; background: #fff; font-family: Carlito, Lato, sans-serif; fill: #000; }
.pie { top: 68px; }
.bars { top: 288px; }
.ctitle { font-size: 16px; font-weight: bold; text-anchor: middle; }
.clabel { font-size: 9px; }
.end { text-anchor: end; }
.caxis { font-size: 9px; font-weight: bold; text-anchor: middle; }
.gridlines { fill: none; stroke: #a5a5a5; }
.bar { fill: #15976a; }

.vscroll { display: flex; flex-direction: column; align-items: center; background: #cdcdcc; }
.vscroll .mark { width: 7px; height: 2px; margin: 0 0 4px; background: #333; }
.vscroll .thumb { width: 5px; height: 47%; border-radius: 3px; background: #7f817f; }
.hscroll { display: flex; align-items: center; justify-content: space-between; padding: 0 1px 0 2px; background: #cdcdcc; }
.hscroll .thumb { width: 47%; height: 6px; border-radius: 3px; background: #7f817f; }
.hscroll .mark { width: 2px; height: 8px; background: #444; }

.tabs { display: flex; flex: none; align-items: stretch; height: 16px; padding-left: 5px; border-bottom: 1px solid #d2d0ce; font-size: 8px; }
.navs { width: 62px; height: 14px; margin-right: 7px; fill: none; stroke: #c8c6c4; }
.add { width: 18px; }
.add svg { width: 14px; height: 14px; }
.tab { padding: 0 8px 1px; }
.tab.active { padding: 1px 9px 0; border-bottom: 2px solid #8a8a8a; background: #fff; font-weight: bold; }
.tab.last { padding-right: 10px; background: linear-gradient(#ccc, #ccc) right / 1px 8px no-repeat; }

.sidebar { position: relative; display: flex; flex-direction: column; align-items: center; width: 39px; border-left: 1px solid #d0cecc; border-bottom: 1px solid #d2d0ce; }
.sidebar button { display: flex; align-items: center; justify-content: center; width: 28px; height: 29px; }
.sidebar svg { width: 16px; height: 16px; }
.sidebar .fx { font-size: 17px; }
.grip { position: absolute; left: -1px; top: 268px; width: 5px; height: 50px; overflow: hidden; background: #959595; color: #fff; font-size: 7px; line-height: 50px; }

.status { display: grid; flex: none; grid-template-columns: 22px 154fr 215fr 217fr 166fr 46fr 30px 20px 20px 181fr 97px 32px; align-items: center; height: 17px; padding-top: 1px; font-size: 8px; }
.status > span { height: 13px; padding-left: 6px; border-right: 1px solid #e0dedc; white-space: nowrap; }
.status .saveicon, .status .ins { padding-left: 4px; }
.saveicon svg { width: 15px; height: 13px; }
.ins svg { width: 26px; height: 12px; }
.status .mid { padding: 0; text-align: center; }
.zoom { display: flex; align-items: center; gap: 2px; }
.zoom button { width: 10px; font-size: 13px; font-weight: bold; }
.zoom input { flex: 1; min-width: 0; height: 9px; appearance: none; background: linear-gradient(#999, #999) center / 100% 1px no-repeat; }
.zoom input::-webkit-slider-thumb { appearance: none; width: 3px; height: 8px; border: 1px solid #555; background: #fff; }
.status .pct { padding-left: 4px; border: 0; }
```
